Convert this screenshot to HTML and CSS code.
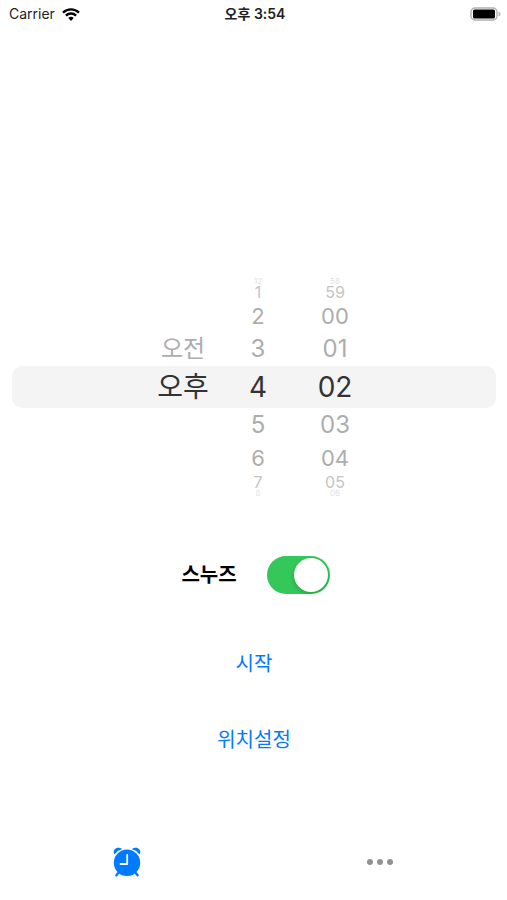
FILE: index.html
```html
<!DOCTYPE html>
<html lang="ko">
<head>
<meta charset="utf-8">
<meta name="viewport" content="width=device-width, initial-scale=1">
<title>알람</title>
<link rel="stylesheet" href="styles.css">
</head>
<body>
<header class="status">
  <div class="carrier">
    <span>Carrier</span>
    <svg class="wifi" viewBox="0 0 18 13" aria-hidden="true">
      <path d="M1 4.6a11.500 11.500 0 0 1 16 0" />
      <path d="M3.900 7.600a7.300 7.300 0 0 1 10.200 0" />
      <path class="dot" d="M6.300 10.100a4 4 0 0 1 5.400 0L9 12.900z" />
    </svg>
  </div>
  <time class="clock">오후 3:54</time>
  <svg class="battery" viewBox="0 0 32 14" role="img" aria-label="배터리">
    <rect class="shell" x="2" y="1" width="26" height="12" rx="4" />
    <rect x="4" y="2.500" width="22" height="9" rx="1.500" />
    <path class="cap" d="M29.500 4.800q2 .5 2 2.200t-2 2.200z" />
  </svg>
</header>
<main class="main">
  <section class="picker" aria-label="알람 시간">
    <ul class="wheel period" role="listbox" aria-label="오전/오후">
      <li class="near" role="option">오전</li>
      <li class="current" role="option" aria-selected="true">오후</li>
    </ul>
    <ul class="wheel" role="listbox" aria-label="시">
      <li class="edge" role="option">12</li>
      <li class="far" role="option">1</li>
      <li class="mid" role="option">2</li>
      <li class="near" role="option">3</li>
      <li class="current" role="option" aria-selected="true">4</li>
      <li class="near" role="option">5</li>
      <li class="mid" role="option">6</li>
      <li class="far" role="option">7</li>
      <li class="edge" role="option">8</li>
    </ul>
    <ul class="wheel" role="listbox" aria-label="분">
      <li class="edge" role="option">58</li>
      <li class="far" role="option">59</li>
      <li class="mid" role="option">00</li>
      <li class="near" role="option">01</li>
      <li class="current" role="option" aria-selected="true">02</li>
      <li class="near" role="option">03</li>
      <li class="mid" role="option">04</li>
      <li class="far" role="option">05</li>
      <li class="edge" role="option">06</li>
    </ul>
  </section>
  <div class="snooze">
    <label for="snooze">스누즈</label>
    <input class="switch" id="snooze" type="checkbox" role="switch" checked>
  </div>
  <div class="actions">
    <button type="button">시작</button>
    <button type="button">위치설정</button>
  </div>
</main>
<nav class="tabs">
  <a href="#alarm" aria-label="알람" aria-current="page">
    <svg class="alarm" viewBox="0 0 28 30" aria-hidden="true">
      <path class="leg" d="M6 25l-2.600 3.200M22 25l2.600 3.200" />
      <circle cx="14" cy="15.800" r="13.200" />
      <path d="M.9 6.200C-.1 2.800 3 .2 6.200.7q1.800.3 3 1.400Q4.200 3.500 1.700 7.200 1.100 7 .9 6.200z" />
      <path d="M27.100 6.200C28.100 2.800 25 .2 21.800.7q-1.800.3-3 1.400Q23.800 3.500 26.300 7.200q.6-.2.8-1z" />
      <path class="hands" d="M14.200 8v9H7.500" />
    </svg>
  </a>
  <a href="#more" aria-label="더 보기">
    <svg class="more" viewBox="0 0 28 8" aria-hidden="true">
      <circle cx="4" cy="4" r="3" /><circle cx="14" cy="4" r="3" /><circle cx="24" cy="4" r="3" />
    </svg>
  </a>
</nav>
</body>
</html>
```
FILE: styles.css
```css
* {
  box-sizing: border-box;
}

body {
  margin: 0;
  min-height: 100vh;
  display: flex;
  flex-direction: column;
  background: #fff;
  color: #000;
  font-family: Inter, "Noto Sans CJK KR", sans-serif;
}

.status {
  display: grid;
  grid-template-columns: 1fr auto 1fr;
  align-items: center;
  height: 28px;
  padding: 0 6px 0 9px;
  font-size: 14px;
  line-height: 20px;
  color: #222;
}

.carrier {
  display: flex;
  align-items: center;
  gap: 7px;
}

.wifi {
  width: 18px;
  height: 13px;
  fill: none;
  stroke: #000;
  stroke-width: 2.4;
}

.wifi .dot {
  fill: #000;
  stroke: none;
}

.clock {
  font-size: 14px;
  font-weight: 600;
}

.battery {
  width: 32px;
  height: 14px;
  justify-self: end;
}

.battery .shell {
  fill: #fff;
  stroke: #b0b0b0;
  stroke-width: 1.4;
}

.battery .cap {
  fill: #b0b0b0;
}

.main {
  padding: 250px 11px 0 12px;
}

.picker {
  position: relative;
  isolation: isolate;
  display: grid;
  grid-template-columns: 74px 76px 78px;
  justify-content: center;
  align-items: center;
  padding-left: 12px;
}

/* Highlight band behind the selected row */
.picker::before {
  content: "";
  position: absolute;
  z-index: -1;
  inset: 88px 0;
  border-radius: 10px;
  background: #f4f4f4;
}

.wheel {
  margin: 0;
  padding: 0;
  list-style: none;
  text-align: center;
  color: #adadad;
}

.period {
  padding-bottom: 34px;
}

.current {
  font-size: 28px;
  line-height: 42px;
  color: #333;
}

.near {
  font-size: 24px;
  line-height: 34px;
}

.mid {
  font-size: 22px;
  line-height: 32px;
}

.far {
  font-size: 16px;
  line-height: 16px;
  color: #c4c4c4;
}

.edge {
  font-size: 8px;
  line-height: 6px;
  color: #e2e2e2;
}

.snooze {
  display: flex;
  justify-content: center;
  align-items: center;
  gap: 30px;
  margin-top: 60px;
  padding-left: 3px;
  font-size: 20px;
  font-weight: 700;
  line-height: 30px;
}

.switch {
  appearance: none;
  width: 63px;
  height: 38px;
  margin: 0;
  padding: 2px;
  border-radius: 19px;
  background: #e9e9ea;
}

.switch::before {
  content: "";
  display: block;
  width: 34px;
  height: 34px;
  border-radius: 50%;
  background: #fff;
  box-shadow: 0 2px 4px rgba(0, 0, 0, 0.2);
}

.switch:checked {
  background: #34c759;
}

.switch:checked::before {
  margin-left: auto;
}

.actions {
  display: flex;
  flex-direction: column;
  align-items: center;
  gap: 36px;
  margin-top: 50px;
}

.actions button {
  padding: 5px 0;
  border: 0;
  background: none;
  color: #007aff;
  font: inherit;
  font-size: 20px;
  line-height: 30px;
}

.tabs {
  display: grid;
  grid-template-columns: 1fr 1fr;
  height: 76px;
  margin-top: auto;
}

.tabs a {
  display: flex;
  justify-content: center;
  align-items: center;
}

.alarm {
  width: 28px;
  height: 30px;
  fill: #007aff;
}

.alarm .leg {
  stroke: #007aff;
  stroke-width: 2.4;
  stroke-linecap: round;
}

.alarm .hands {
  fill: none;
  stroke: #fff;
  stroke-width: 1.8;
  stroke-linecap: round;
  stroke-linejoin: round;
}

.more {
  width: 28px;
  height: 8px;
  fill: #929292;
}
```
